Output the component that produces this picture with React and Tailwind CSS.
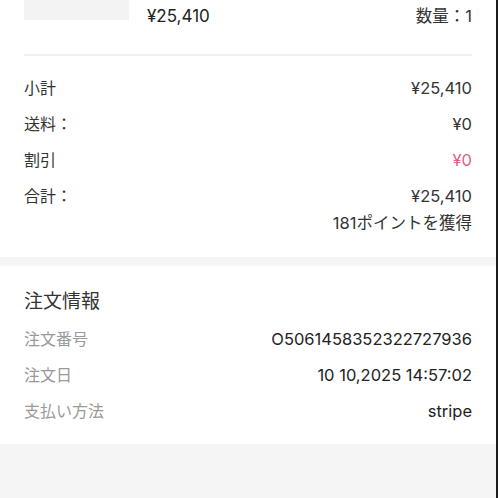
export default function App() {
  const font = { fontFamily: 'Inter, "Noto Sans CJK JP", sans-serif' };
  return (
    <div className="min-h-[498px] w-[498px] bg-[#f5f5f5] border-r-2 border-[#1c1c1c]" style={font}>
      <div className="bg-white px-6 pb-[22px]">
        <div className="flex h-[32px] items-start">
          <div className="h-[20px] w-[105px] bg-[#f3f3f3]" />
          <div className="ml-[18px] mt-[4px] flex-1 text-[17px] leading-6 text-[#222]">¥25,410</div>
          <div className="mt-[4px] text-[16.5px] leading-6 text-[#333]">数量：1</div>
        </div>
        <div className="mt-[22px] h-[2px] bg-[#f0f0f0]" />
        <div className="mt-[20px] flex flex-col gap-[12px] text-[16px] leading-6 text-[#333]">
          <div className="flex justify-between"><span>小計</span><span className="text-[16.5px]">¥25,410</span></div>
          <div className="flex justify-between"><span>送料：</span><span className="text-[16.5px]">¥0</span></div>
          <div className="flex justify-between"><span>割引</span><span className="text-[16.5px] text-[#e0608a]">¥0</span></div>
          <div className="flex flex-col">
            <div className="flex justify-between"><span>合計：</span><span className="text-[16.5px]">¥25,410</span></div>
            <div className="mt-[3px] text-right text-[16.5px]">181ポイントを獲得</div>
          </div>
        </div>
      </div>
      <div className="mt-[9px] bg-white px-6 pt-[22px] pb-[21px]">
        <div className="text-[19px] leading-7 text-[#333]">注文情報</div>
        <div className="mt-[11px] flex flex-col gap-[12px] text-[16px] leading-6">
          <div className="flex justify-between"><span className="text-[#999]">注文番号</span><span className="text-[16.5px] text-[#222]">O5061458352322727936</span></div>
          <div className="flex justify-between"><span className="text-[#999]">注文日</span><span className="text-[16.5px] text-[#222]">10 10,2025 14:57:02</span></div>
          <div className="flex justify-between"><span className="text-[#999]">支払い方法</span><span className="text-[16.5px] text-[#222]">stripe</span></div>
        </div>
      </div>
    </div>
  );
}
